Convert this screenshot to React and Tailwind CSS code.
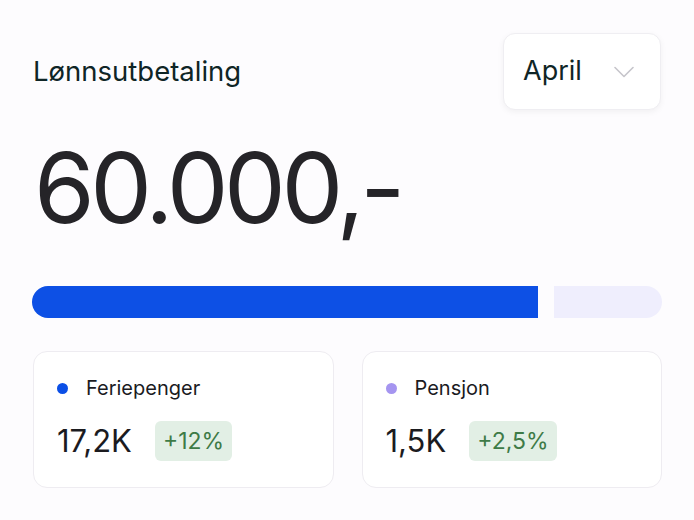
import React from "react";

function Stat({ dot, label, value, change }) {
  return (
    <div className="flex-1 rounded-[14px] border border-[#eeecf1] bg-white pl-[23px] pt-[24px] pb-[26px]">
      <div className="flex items-center h-[24px]">
        <span className={`w-[11px] h-[11px] rounded-full ${dot}`} />
        <span className="ml-[18px] text-[20px] text-[#1b1b1f] leading-[24px]">{label}</span>
      </div>
      <div className="flex items-center mt-[21px]">
        <span className="text-[31px] leading-[40px] text-[#1b1b1f]">{value}</span>
        <span className="ml-[23px] h-[40px] px-[8px] rounded-[6px] bg-[#e2efe5] text-[#3e7b47] text-[23px] leading-[40px]">{change}</span>
      </div>
    </div>
  );
}

export default function App() {
  return (
    <div className="w-[694px] h-[520px] bg-[#fdfcfe] px-[32px] pt-[33px]" style={{ fontFamily: "Inter, 'Noto Sans', sans-serif" }}>
      <div className="flex items-center justify-between">
        <span className="pl-[1px] text-[27.5px] text-[#0f2526]">Lønnsutbetaling</span>
        <div className="mr-[1px] w-[158px] h-[77px] rounded-[12px] border border-[#efeef2] bg-white shadow-[0_2px_6px_rgba(0,0,0,0.05)] flex items-center justify-between pl-[19px] pr-[26px]">
          <span className="text-[27px] text-[#0f2526]">April</span>
          <svg width="20" height="12" viewBox="0 0 20 12" fill="none">
            <path d="M1 1.5 L10 10.5 L19 1.5" stroke="#c6c5cb" strokeWidth="1.6" strokeLinecap="round" strokeLinejoin="round" />
          </svg>
        </div>
      </div>
      <div className="mt-[28px] pl-[2px] text-[98px] leading-[100px] text-[#252428] tracking-[-4.4px]">60.000,-</div>
      <div className="mt-[48px] flex gap-[16px] h-[32px]">
        <div className="w-[506px] rounded-l-full bg-[#0d50e5]" />
        <div className="flex-1 rounded-r-full bg-[#efeefd]" />
      </div>
      <div className="mt-[33px] flex gap-[28px] pl-[1px]">
        <Stat dot="bg-[#0b4fe6]" label="Feriepenger" value="17,2K" change="+12%" />
        <Stat dot="bg-[#a595f0]" label="Pensjon" value="1,5K" change="+2,5%" />
      </div>
    </div>
  );
}
